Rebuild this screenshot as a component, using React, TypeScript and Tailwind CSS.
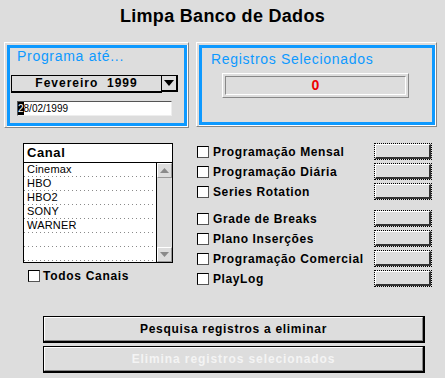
import React from "react";

const blue = "text-[#0d99ff]";

function GroupBox({ children, className }: { children: React.ReactNode; className: string }) {
  return (
    <div
      className={`border border-t-white border-l-white border-r-[#888888] border-b-[#888888] pl-[2px] pt-[2px] ${className}`}
    >
      <div className="h-full border-r border-b border-white">
        <div className="h-full border-[3px] border-[#0d99ff]">{children}</div>
      </div>
    </div>
  );
}

function CheckBox() {
  return (
    <div className="w-[12px] h-[12px] shrink-0 bg-white border border-t-black border-l-black border-r-[#555555] border-b-[#555555]" />
  );
}

function SmallButton() {
  return (
    <div className="w-[58px] h-[17px] border border-dotted border-black">
      <div className="h-full bg-[#dddddd] border-t border-l border-r-2 border-b-2 border-t-white border-l-white border-r-[#333333] border-b-[#333333]" />
    </div>
  );
}

function ScrollArrow({ up }: { up?: boolean }) {
  return (
    <div className="h-[15px] flex items-center justify-center bg-[#dddddd] border-t border-l border-r border-b border-t-white border-l-white border-r-[#999999] border-b-[#999999]">
      <svg width="9" height="5" viewBox="0 0 9 5">
        {up ? (
          <polygon points="0,5 4.5,0 9,5" fill="#8a8a8a" />
        ) : (
          <polygon points="0,0 4.5,5 9,0" fill="#8a8a8a" />
        )}
      </svg>
    </div>
  );
}

const channels = ["Cinemax", "HBO", "HBO2", "SONY", "WARNER", "", ""];

const options = [
  "Programação Mensal",
  "Programação Diária",
  "Series Rotation",
  "Grade de Breaks",
  "Plano Inserções",
  "Programação Comercial",
  "PlayLog",
];

export default function App() {
  return (
    <div className="w-[445px] h-[378px] bg-[#dddddd] overflow-hidden flex flex-col text-black [font-family:'Liberation_Sans',Arial,sans-serif]">
      {/* Title */}
      <div className="h-[42px] pt-[6px] text-center text-[18px] leading-[20px] font-bold tracking-[0.3px]">
        Limpa Banco de Dados
      </div>

      {/* Top panels */}
      <div className="flex items-start">
        <GroupBox className="ml-[4px] w-[185px] h-[86px]">
          <div className={`pl-[7px] text-[14px] leading-[16px] tracking-[0.7px] ${blue}`}>
            Programa até...
          </div>
          <div className="flex ml-[1px] mt-[11px]">
            <div className="w-[151px] h-[18px] border border-black border-b-2 text-center text-[12px] leading-[15px] font-bold tracking-[1px]">
              Fevereiro&nbsp;&nbsp;1999
            </div>
            <div className="w-[17px] h-[17px] -ml-px border border-black border-b-2 border-r-2 flex items-center justify-center">
              <svg width="10" height="6" viewBox="0 0 10 6">
                <polygon points="0,0 5,6 10,0" fill="#000" />
              </svg>
            </div>
          </div>
          <div className="ml-[7px] mt-[8px] w-[155px] h-[15px] bg-white border border-t-[#555555] border-l-[#555555] border-r-[#eeeeee] border-b-[#eeeeee] flex items-center text-[10px] leading-[13px]">
            <span className="bg-black text-white">2</span>
            <span>8/02/1999</span>
          </div>
        </GroupBox>

        <GroupBox className="ml-[7px] w-[241px] h-[85px]">
          <div className={`pl-[9px] pt-[3px] text-[14px] leading-[16px] tracking-[0.7px] ${blue}`}>
            Registros Selecionados
          </div>
          <div className="ml-[20px] mt-[6px] w-[187px] h-[25px] border border-t-white border-l-white border-r-[#888888] border-b-[#888888] p-[2px]">
            <div className="h-full border border-t-[#888888] border-l-[#888888] border-r-white border-b-white flex items-center justify-center text-[#ee0000] text-[14px] font-bold">
              0
            </div>
          </div>
        </GroupBox>
      </div>

      {/* Middle section */}
      <div className="flex items-start h-[188px]">
        <div className="ml-[23px] mt-[15px] w-[150px]">
          <div className="h-[120px] bg-white border border-black flex flex-col">
            <div className="h-[19px] border-b border-black pl-[3px] text-[13px] leading-[18px] font-bold tracking-[0.6px]">
              Canal
            </div>
            <div className="flex flex-1">
              <div className="flex-1 flex flex-col">
                {channels.map((c, i) => (
                  <div key={i} className="h-[14px] flex flex-col">
                    <div className="h-[13px] pl-[3px] text-[11px] leading-[13px] tracking-[0.2px]">{c}</div>
                    <div className="h-px mr-[2px] bg-[linear-gradient(to_right,#8a8a8a_1px,transparent_1px)] bg-[length:4px_1px] bg-repeat-x" />
                  </div>
                ))}
              </div>
              <div className="w-[16px] border-l border-black flex flex-col bg-[#dddddd]">
                <ScrollArrow up />
                <div className="flex-1" />
                <ScrollArrow />
              </div>
            </div>
          </div>
          <div className="flex items-center ml-[5px] mt-[6px] h-[14px]">
            <CheckBox />
            <span className="ml-[3px] text-[12px] font-bold tracking-[0.7px]">Todos Canais</span>
          </div>
        </div>

        <div className="ml-[24px] mt-[15px] flex flex-col">
          {options.map((o, i) => (
            <div key={o} className={`flex items-center h-[17px] ${i === 3 ? "mt-[10px]" : i > 0 ? "mt-[3px]" : ""}`}>
              <CheckBox />
              <span className="ml-[4px] w-[161px] text-[12px] leading-[14px] font-bold tracking-[0.6px] whitespace-nowrap">
                {o}
              </span>
              <SmallButton />
            </div>
          ))}
        </div>
      </div>

      {/* Bottom buttons */}
      <div className="ml-[43px] w-[382px] flex flex-col gap-[3px]">
        <div className="h-[27px] border border-black border-r-2 border-b-2">
          <div className="h-full border border-t-white border-l-white border-r-[#888888] border-b-[#888888] flex items-center justify-center text-[12px] font-bold tracking-[0.7px]">
            Pesquisa registros a eliminar
          </div>
        </div>
        <div className="h-[27px] border border-black border-r-2 border-b-2">
          <div className="h-full border border-t-white border-l-white border-r-[#888888] border-b-[#888888] flex items-center justify-center text-[12px] font-bold tracking-[0.9px] text-[#f4f4f4]">
            Elimina registros selecionados
          </div>
        </div>
      </div>
    </div>
  );
}
